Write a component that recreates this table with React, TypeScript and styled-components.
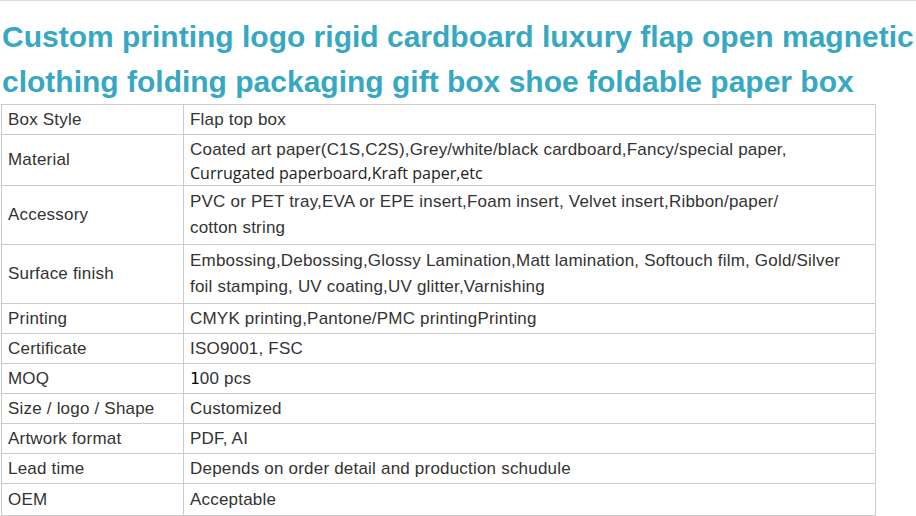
import React from 'react';
import styled, { createGlobalStyle } from 'styled-components';

/**
 * styled-component
 * _______________________________________________________________________________
 */

const GlobalStyle = createGlobalStyle`
  html, body {
    margin: 0;
    padding: 0;
    background: #fff;
  }
`;

const Root = styled.section`
  width: 916px;
  height: 516px;
  overflow: hidden;
  border-top: 1px solid #dcdcdc;
  padding: 0 0 0 1px;
  box-sizing: border-box;
  font-family: 'Liberation Sans', Arial, sans-serif;
`;

const Title = styled.h1`
  margin: 13px 0 0 1px;
  width: 915px;
  font-size: 30px;
  line-height: 45px;
  font-weight: 700;
  color: #37a8c2;
`;

const SpecTable = styled.table`
  width: 875px;
  border-collapse: collapse;
  table-layout: fixed;
  color: #333;
  font-size: 17px;
  letter-spacing: 0.2px;
`;

const Row = styled.tr<{ $rowHeight: number }>`
  td {
    height: ${({ $rowHeight }) => $rowHeight}px;
  }
`;

const Cell = styled.td`
  border: 1px solid #cccccc;
  padding: 0 6px;
  vertical-align: middle;
  line-height: 26px;
  box-sizing: border-box;
`;

const Line = styled.div`
  line-height: 26px;
`;

const AltLine = styled.div`
  font-family: 'Open Sans', 'Noto Sans', sans-serif;
  font-size: 16px;
  letter-spacing: 0;
  line-height: 20px;
  color: #222;
`;

const Digit = styled.span`
  font-family: 'DejaVu Sans Mono', monospace;
  color: #000;
  font-size: 16px;
`;

/**
 * data
 * _______________________________________________________________________________
 */
type Spec = {
  label: string;
  value: React.ReactNode;
  rowHeight: number;
};

const specs: Spec[] = [
  { label: 'Box Style', value: 'Flap top box', rowHeight: 30 },
  {
    label: 'Material',
    value: (
      <>
        <Line>Coated art paper(C1S,C2S),Grey/white/black cardboard,Fancy/special paper,</Line>
        <AltLine>Currugated paperboard,Kraft paper,etc</AltLine>
      </>
    ),
    rowHeight: 51,
  },
  {
    label: 'Accessory',
    value: (
      <>
        <Line>PVC or PET tray,EVA or EPE insert,Foam insert, Velvet insert,Ribbon/paper/</Line>
        <Line>cotton string</Line>
      </>
    ),
    rowHeight: 59,
  },
  {
    label: 'Surface finish',
    value: (
      <>
        <Line>Embossing,Debossing,Glossy Lamination,Matt lamination, Softouch film, Gold/Silver</Line>
        <Line>foil stamping, UV coating,UV glitter,Varnishing</Line>
      </>
    ),
    rowHeight: 59,
  },
  { label: 'Printing', value: 'CMYK printing,Pantone/PMC printingPrinting', rowHeight: 30 },
  { label: 'Certificate', value: 'ISO9001, FSC', rowHeight: 30 },
  {
    label: 'MOQ',
    value: (
      <>
        <Digit>1</Digit>00 pcs
      </>
    ),
    rowHeight: 30,
  },
  { label: 'Size / logo / Shape', value: 'Customized', rowHeight: 30 },
  { label: 'Artwork format', value: 'PDF, AI', rowHeight: 30 },
  { label: 'Lead time', value: 'Depends on order detail and production schudule', rowHeight: 30 },
  { label: 'OEM', value: 'Acceptable', rowHeight: 32 },
];

const App = () => {
  /**
   * template
   * _______________________________________________________________________________
   */
  return (
    <Root>
      <GlobalStyle />
      <Title>
        Custom printing logo rigid cardboard luxury flap open magnetic clothing folding packaging gift box shoe
        foldable paper box
      </Title>
      <SpecTable>
        <colgroup>
          <col style={{ width: 182 }} />
          <col />
        </colgroup>
        <tbody>
          {specs.map((spec) => (
            <Row key={spec.label} $rowHeight={spec.rowHeight}>
              <Cell>{spec.label}</Cell>
              <Cell>{spec.value}</Cell>
            </Row>
          ))}
        </tbody>
      </SpecTable>
    </Root>
  );
};

export default App;
